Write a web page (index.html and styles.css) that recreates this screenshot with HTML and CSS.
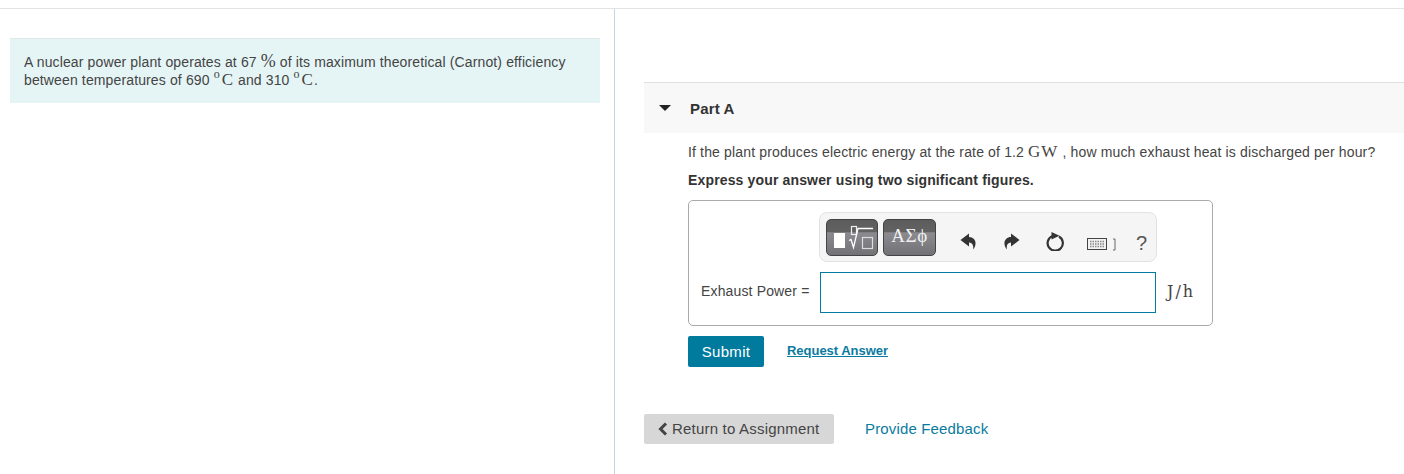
FILE: index.html
```html
<!DOCTYPE html>
<html lang="en">
<head>
    <meta charset="UTF-8">
    <title>Part A</title>
    <link rel="stylesheet" href="styles.css">
</head>
<body>
    <div class="top-rule"></div>
    <div class="layout">
        <div class="left-col">
            <div class="intro">
                A nuclear power plant operates at 67 <span class="math pct">%</span> of its maximum theoretical (Carnot) efficiency
                between temperatures of 690 <span class="math"><sup>o</sup>C</span> and 310 <span class="math"><sup>o</sup>C</span>.
            </div>
        </div>
        <div class="right-col">
            <div class="part-head">
                <span class="caret"></span>
                <span class="part-title">Part A</span>
            </div>
            <div class="part-body">
                <p class="question">If the plant produces electric energy at the rate of 1.2 <span class="math">GW</span> , how much exhaust heat is discharged per hour?</p>
                <p class="instruct">Express your answer using two significant figures.</p>
                <div class="answer-box">
                    <div class="toolbar-row">
                        <div class="toolbar">
                            <button class="tool-btn tool-math">
                                <svg width="50" height="35" viewBox="0 0 50 35">
                                    <rect x="7" y="13" width="11" height="15" fill="#fff"/>
                                    <rect x="24.500" y="6.500" width="5" height="8" fill="none" stroke="#eee" stroke-width="1.200"/>
                                    <path d="M22 20.500l2-1 2.500 8L31 8.500h15" fill="none" stroke="#fff" stroke-width="1.300"/>
                                    <rect x="35.500" y="17.500" width="10" height="11" fill="none" stroke="#ddd" stroke-width="1.200"/>
                                </svg>
                            </button>
                            <button class="tool-btn tool-greek">&Alpha;&Sigma;&#981;</button>
                            <div class="tool-icons">
                                <svg class="icon-undo" width="16" height="17" viewBox="0 0 16 17"><path d="M0.500 7L9 0.500V4c4 0 7 3 6.500 7-.2 2-1 4-2.500 5.500.8-3.500 0-6.500-4-7v4z" fill="#333"/></svg>
                                <svg class="icon-redo" width="16" height="17" viewBox="0 0 16 17"><path d="M15.500 7L7 0.500V4C3 4 0 7 .5 11c.2 2 1 4 2.500 5.500C2.200 13 3 10 7 9.500v4z" fill="#333"/></svg>
                                <svg class="icon-reset" width="18" height="19" viewBox="0 0 18 19"><path d="M6.500 4a7.600 7.600 0 1 0 6.500 .5" fill="none" stroke="#333" stroke-width="2.200"/><path d="M5.500 0l8 3.800-8 3.700z" fill="#333"/></svg>
                                <svg class="icon-keys" width="29" height="13" viewBox="0 0 29 13">
                                    <rect x="0.500" y="0.500" width="19" height="11" fill="#f2f2f2" stroke="#444"/>
                                    <path d="M3 3.500h14M3 6h14M3 8.500h14" stroke="#888" stroke-width="1.500" stroke-dasharray="1.500 1"/>
                                    <path d="M26 1h2v11h-2" fill="none" stroke="#666"/>
                                </svg>
                                <span class="icon-help">?</span>
                            </div>
                        </div>
                    </div>
                    <div class="input-row">
                        <label class="input-label" for="answer">Exhaust Power =</label>
                        <input class="answer-input" id="answer" type="text">
                        <span class="unit">J/h</span>
                    </div>
                </div>
                <div class="actions">
                    <button class="submit">Submit</button>
                    <a class="request" href="#">Request Answer</a>
                </div>
            </div>
            <div class="footer-links">
                <button class="return">
                    <svg width="10" height="14" viewBox="0 0 10 14"><path d="M8 1.500L2.500 7 8 12.500" fill="none" stroke="#444" stroke-width="3"/></svg>
                    Return to Assignment
                </button>
                <a class="feedback" href="#">Provide Feedback</a>
            </div>
        </div>
    </div>
</body>
</html>
```

FILE: styles.css
```css
html, body {
    height: 100%;
    overflow: hidden;
}

body {
    margin: 0;
    font-family: "Liberation Sans", Arial, sans-serif;
    font-size: 14px;
    letter-spacing: 0.15px;
    color: #444;
    background-color: #fff;
}

.top-rule {
    height: 8px;
    border-bottom: 1px solid #e3e3e3;
}

.layout {
    display: flex;
    height: 465px;
}

.left-col {
    box-sizing: border-box;
    width: 615px;
    padding: 29px 14px 0 10px;
    border-right: 1px solid #c6d4de;
}

.intro {
    box-sizing: border-box;
    height: 65px;
    padding: 14px;
    line-height: 18px;
    letter-spacing: 0.13px;
    background-color: #e5f5f6;
    border-top: 1px solid #dfe8e9;
}

.math {
    font-family: "Liberation Serif", serif;
    font-size: 17px;
    line-height: 0;
    letter-spacing: 1px;
}

.math sup {
    font-size: 12px;
    line-height: 0;
    letter-spacing: 0;
    margin-right: 2px;
}

.pct {
    font-size: 18px;
    letter-spacing: 0;
}

.right-col {
    flex: 1;
    padding: 73px 0 0 29px;
}

.part-head {
    box-sizing: border-box;
    display: flex;
    align-items: center;
    height: 51px;
    background-color: #f8f8f8;
    border-top: 1px solid #e0e0e0;
}

.caret {
    width: 0;
    height: 0;
    margin-left: 15px;
    border-top: 6px solid #222;
    border-left: 6px solid transparent;
    border-right: 6px solid transparent;
}

.part-title {
    margin-left: 19px;
    color: #333;
    font-size: 15px;
    font-weight: bold;
}

.part-body {
    padding-left: 44px;
}

.question {
    margin: 0;
    padding-top: 10px;
    height: 28px;
    line-height: 18px;
}

.instruct {
    margin: 0;
    height: 29px;
    color: #333;
    line-height: 18px;
    font-weight: bold;
}

.answer-box {
    box-sizing: border-box;
    width: 525px;
    height: 126px;
    border: 1px solid #aaa;
    border-radius: 5px;
    padding-top: 11px;
}

.toolbar-row {
    padding-left: 130px;
}

.toolbar {
    box-sizing: border-box;
    display: flex;
    align-items: center;
    width: 338px;
    height: 50px;
    padding-left: 6px;
    gap: 5px;
    background-color: #f5f5f5;
    border: 1px solid #e2e2e2;
    border-radius: 8px;
}

.tool-btn {
    box-sizing: border-box;
    height: 37px;
    padding: 0 0 4px;
    margin-top: 1px;
    color: #f0f0f0;
    font-family: "Liberation Serif", serif;
    font-size: 19px;
    letter-spacing: 0.5px;
    border: 1px solid #444;
    border-radius: 5px;
    background: linear-gradient(#5c5c5c 0, #626262 35%, #8c8c90 36%, #727276 100%);
}

.tool-math {
    width: 52px;
    padding: 0;
}

.tool-math svg {
    display: block;
}

.tool-greek {
    width: 53px;
}

.tool-icons {
    display: flex;
    align-items: center;
    margin-top: 9px;
}

.icon-undo {
    margin-left: 19px;
}

.icon-redo {
    margin-left: 28px;
}

.icon-reset {
    margin-left: 26px;
}

.icon-keys {
    margin-left: 23px;
    margin-top: 5px;
}

.icon-help {
    margin-left: 20px;
    margin-top: 4px;
    font-size: 20px;
    color: #555;
}

.input-row {
    display: flex;
    align-items: center;
    margin-top: 10px;
    padding-left: 12px;
}

.input-label {
    width: 119px;
    margin-top: -4px;
    color: #444;
}

.answer-input {
    box-sizing: border-box;
    width: 336px;
    height: 41px;
    padding: 0 6px;
    border: 1px solid #007c9f;
    background-color: #fff;
}

.unit {
    margin: -3px 0 0 11px;
    font-family: "DejaVu Serif", serif;
    font-size: 16px;
    letter-spacing: 2px;
}

.actions {
    display: flex;
    align-items: flex-start;
    margin-top: 10px;
}

.submit {
    width: 76px;
    height: 31px;
    padding: 0;
    color: #fff;
    font-family: inherit;
    font-size: 15px;
    letter-spacing: 0.3px;
    background-color: #007b9e;
    border: none;
    border-radius: 2px;
}

.request {
    margin: 7px 0 0 23px;
    color: #0a7ba0;
    font-size: 13px;
    font-weight: bold;
    letter-spacing: -0.03px;
}

.footer-links {
    display: flex;
    align-items: center;
    margin-top: 47px;
}

.return {
    box-sizing: border-box;
    display: flex;
    align-items: center;
    gap: 4px;
    width: 190px;
    height: 30px;
    padding: 0 0 1px 14px;
    color: #444;
    font-family: inherit;
    font-size: 15px;
    letter-spacing: 0.2px;
    background-color: #d7d7d7;
    border: none;
    border-radius: 2px;
}

.feedback {
    margin: -1px 0 0 31px;
    color: #0a7ba0;
    font-size: 15px;
    text-decoration: none;
}
```
